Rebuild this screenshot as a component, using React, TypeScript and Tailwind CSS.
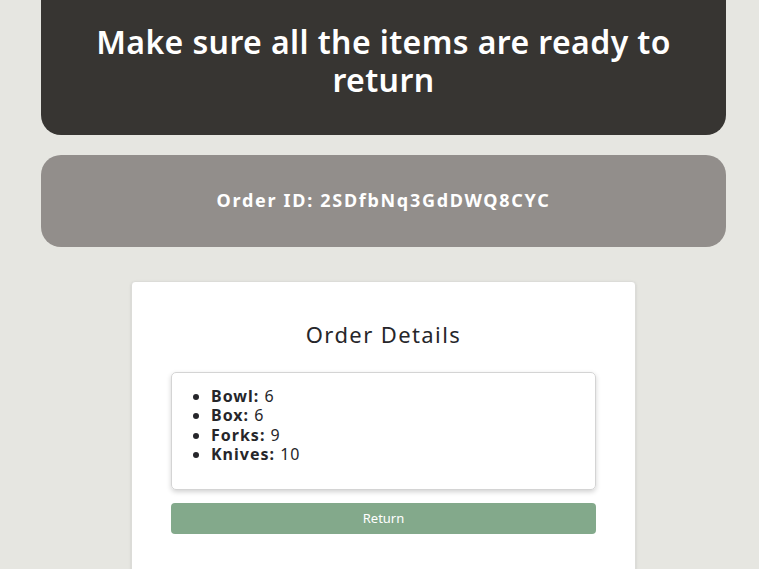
import React from 'react';

const items = [
  { name: 'Bowl', qty: 6 },
  { name: 'Box', qty: 6 },
  { name: 'Forks', qty: 9 },
  { name: 'Knives', qty: 10 },
];

export default function App() {
  return (
    <div
      className="min-h-screen bg-[#e6e6e1] pb-10"
      style={{ fontFamily: '"Noto Sans", "Open Sans", sans-serif' }}
    >
      {/* Title banner */}
      <div className="ml-[41px] w-[685px] bg-[#373532] rounded-b-[20px] pt-[23px] pb-[36px] px-10 text-center">
        <h1 className="text-[32px] leading-[38px] font-semibold tracking-[0.4px] text-white">
          Make sure all the items are ready to return
        </h1>
      </div>

      {/* Order id */}
      <div className="ml-[41px] w-[685px] mt-[20px] h-[92px] bg-[#928e8b] rounded-[20px] flex items-center justify-center">
        <span className="text-[18px] font-bold tracking-[1.7px] text-white -mt-[2px]">Order ID: 2SDfbNq3GdDWQ8CYC</span>
      </div>

      {/* Details card */}
      <div className="ml-[131px] w-[505px] mt-[34px] bg-white rounded-[4px] border border-[#dcdcd8] shadow-sm px-[39px] pt-[37px] pb-[40px]">
        <h2 className="text-center text-[22px] leading-[30px] tracking-[1.4px] text-[#26262a]">Order Details</h2>

        <div className="mt-[23px] rounded-[5px] border border-[#d4d4d4] shadow-[0_2px_5px_rgba(0,0,0,0.18)] pt-[14px] pb-[25px] pl-[10px] pr-4">
          <ul className="list-disc pl-[29px] text-[16px] leading-[19.3px] tracking-[1px] text-[#26262a]">
            {items.map(item => (
              <li key={item.name}>
                <span className="font-bold">{item.name}:</span> {item.qty}
              </li>
            ))}
          </ul>
        </div>

        <button className="mt-[13px] w-full h-[31px] rounded-[4px] bg-[#83a98b] text-white text-[13px] pt-px">
          Return
        </button>
      </div>
    </div>
  );
}
